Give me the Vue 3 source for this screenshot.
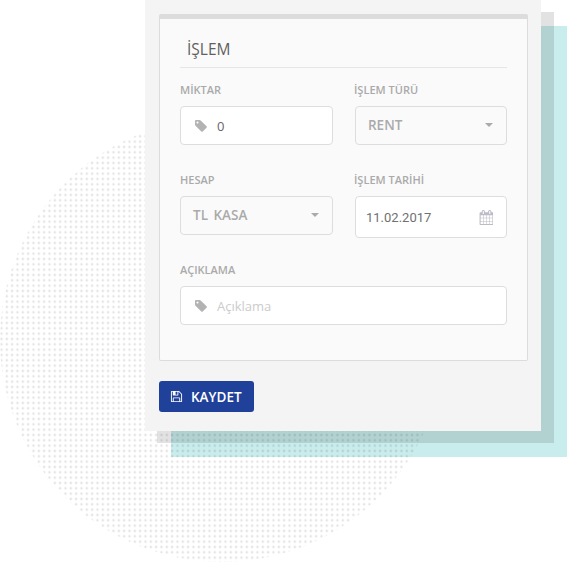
<template>
  <div class="page">
    <div class="deco deco--teal"></div>
    <div class="deco deco--shade"></div>
    <svg class="deco deco--dots" viewBox="0 0 444 444">
      <defs>
        <pattern id="dot-grid" width="5.333" height="5.333" patternUnits="userSpaceOnUse" x="-1.2" y="-0.3">
          <circle cx="2.667" cy="2.667" r="1.25" fill="#000" fill-opacity="0.1" />
        </pattern>
      </defs>
      <circle cx="222" cy="222" r="222" fill="url(#dot-grid)" />
    </svg>

    <div class="panel">
      <div class="card">
        <div class="card__head">İŞLEM</div>
        <div class="form">
          <div class="field">
            <label>MİKTAR</label>
            <div class="input">
              <svg class="icon-tag" viewBox="0 0 1792 1792"><path :d="tagPath" /></svg>
              <span class="input__value">0</span>
            </div>
          </div>
          <div class="field">
            <label>İŞLEM TÜRÜ</label>
            <div class="select">
              <span>RENT</span>
              <i class="caret"></i>
            </div>
          </div>
          <div class="field">
            <label>HESAP</label>
            <div class="select">
              <span>TL KASA</span>
              <i class="caret"></i>
            </div>
          </div>
          <div class="field">
            <label>İŞLEM TARİHİ</label>
            <div class="input input--date">
              <span class="date">11.02.2017</span>
              <svg class="icon-cal" viewBox="0 0 1664 1792"><path :d="calendarPath" /></svg>
            </div>
          </div>
          <div class="field field--wide">
            <label>AÇIKLAMA</label>
            <div class="input">
              <svg class="icon-tag" viewBox="0 0 1792 1792"><path :d="tagPath" /></svg>
              <span class="input__placeholder">Açıklama</span>
            </div>
          </div>
        </div>
      </div>
      <button class="save" type="button">
        <svg class="icon-save" viewBox="0 0 1792 1792"><path :d="savePath" /></svg>
        KAYDET
      </button>
    </div>
  </div>
</template>

<script setup>
const tagPath =
  "M576 448q0-53-37.500-90.500t-90.500-37.500-90.500 37.500-37.500 90.500 37.500 90.500 90.500 37.500 90.500-37.500 37.500-90.500zm1067 576q0 53-37 90l-491 492q-39 37-91 37-53 0-90-37l-715-716q-38-37-64.500-101t-26.500-117v-416q0-52 38-90t90-38h416q53 0 117 26.500t102 64.500l715 714q37 39 37 91z";
const calendarPath =
  "M192 1664h288v-288h-288v288zm352 0h320v-288h-320v288zm-352-352h288v-320h-288v320zm352 0h320v-320h-320v320zm-352-384h288v-288h-288v288zm736 736h320v-288h-320v288zm-384-736h320v-288h-320v288zm768 736h288v-288h-288v288zm-384-352h320v-320h-320v320zm-352-864v-288q0-13-9.500-22.500t-22.500-9.500h-64q-13 0-22.500 9.500t-9.500 22.500v288q0 13 9.500 22.500t22.500 9.500h64q13 0 22.500-9.500t9.500-22.500zm736 864h288v-320h-288v320zm-384-384h320v-288h-320v288zm384 0h288v-288h-288v288zm32-480v-288q0-13-9.500-22.500t-22.500-9.500h-64q-13 0-22.500 9.500t-9.500 22.500v288q0 13 9.500 22.500t22.500 9.500h64q13 0 22.500-9.500t9.500-22.500zm384-64v1280q0 52-38 90t-90 38h-1408q-52 0-90-38t-38-90v-1280q0-52 38-90t90-38h128v-96q0-66 47-113t113-47h64q66 0 113 47t47 113v96h384v-96q0-66 47-113t113-47h64q66 0 113 47t47 113v96h128q52 0 90 38t38 90z";
const savePath =
  "M512 1536h768v-384h-768v384zm896 0h128v-896q0-14-10-38.500t-20-34.500l-281-281q-10-10-34-20t-39-10v416q0 40-28 68t-68 28h-576q-40 0-68-28t-28-68v-416h-128v1280h128v-416q0-40 28-68t68-28h832q40 0 68 28t28 68v416zm-384-928v-320q0-13-9.500-22.500t-22.500-9.500h-192q-13 0-22.500 9.500t-9.500 22.500v320q0 13 9.500 22.500t22.500 9.500h192q13 0 22.500-9.500t9.500-22.500zm640 32v928q0 40-28 68t-68 28h-1344q-40 0-68-28t-28-68v-1344q0-40 28-68t68-28h928q40 0 88 20t76 48l280 280q28 28 48 76t20 88z";
</script>

<style>
html,
body {
  margin: 0;
  background: #fff;
  overflow: hidden;
}
</style>

<style scoped>
.page {
  position: relative;
  width: 567px;
  height: 563px;
  overflow: hidden;
  background: #fff;
  font-family: "Open Sans", sans-serif;
}

.deco {
  position: absolute;
}

.deco--teal {
  left: 171px;
  top: 26px;
  width: 396px;
  height: 431px;
  background: #c9ecec;
}

.deco--shade {
  left: 157px;
  top: 12px;
  width: 397px;
  height: 431px;
  background: rgba(0, 0, 0, 0.115);
}

.deco--dots {
  left: 0;
  top: 118px;
  width: 444px;
  height: 444px;
}

.panel {
  position: relative;
  box-sizing: border-box;
  width: 396px;
  height: 431px;
  margin-left: 145px;
  padding: 14px 13px 0 14px;
  background: #f4f4f4;
}

.card {
  box-sizing: border-box;
  height: 347px;
  padding: 0 20px;
  background: #fafafa;
  border: 1px solid #dcdcdc;
  border-top: 5px solid #dcdcdc;
  border-radius: 2px;
}

.card__head {
  box-sizing: border-box;
  height: 49px;
  padding: 17px 0 0 7px;
  border-bottom: 1px solid #e6e6e6;
  font-size: 15.5px;
  line-height: 26px;
  color: #5f5f5f;
}

.form {
  display: grid;
  grid-template-columns: 153px 152px;
  grid-auto-rows: 66px;
  gap: 24px 22px;
  margin-top: 14px;
}

.field--wide {
  grid-column: 1 / 3;
}

label {
  display: block;
  height: 16px;
  margin-bottom: 8px;
  font-size: 11px;
  line-height: 16px;
  font-weight: 600;
  color: #aaa;
}

.field:nth-child(even) label {
  margin-left: -1px;
}

.input,
.select {
  box-sizing: border-box;
  display: flex;
  align-items: center;
  height: 39px;
  border: 1px solid #ddd;
  border-radius: 4px;
}

.input {
  padding-left: 13px;
  background: #fff;
}

.input--date {
  height: 42px;
  padding: 0 13px 0 10px;
  justify-content: space-between;
}

.select {
  justify-content: space-between;
  padding: 0 13px 1px 12px;
  font-size: 13.5px;
  font-weight: 600;
  word-spacing: 2px;
  color: #aaa;
}

.caret {
  width: 0;
  height: 0;
  border-left: 4px solid transparent;
  border-right: 4px solid transparent;
  border-top: 4px solid #aaa;
}

.icon-tag {
  width: 14px;
  height: 14px;
  margin-right: 9px;
  fill: #b3b3b3;
}

.input__value {
  font-size: 13px;
  color: #666;
}

.input__placeholder {
  font-size: 13px;
  color: #ccc;
}

.date {
  font-family: Roboto, sans-serif;
  font-size: 13px;
  color: #707070;
}

.icon-cal {
  width: 14px;
  height: 15px;
  fill: #bcbcc6;
}

.save {
  display: flex;
  align-items: center;
  box-sizing: border-box;
  width: 95px;
  height: 31px;
  margin-top: 20px;
  padding: 0 0 0 11px;
  border: 0;
  border-radius: 3px;
  background: #20419a;
  color: #fff;
  font-family: "Open Sans", sans-serif;
  font-size: 13.5px;
  font-weight: 600;
}

.icon-save {
  width: 13px;
  height: 13px;
  margin-right: 8px;
  fill: #fff;
}
</style>
